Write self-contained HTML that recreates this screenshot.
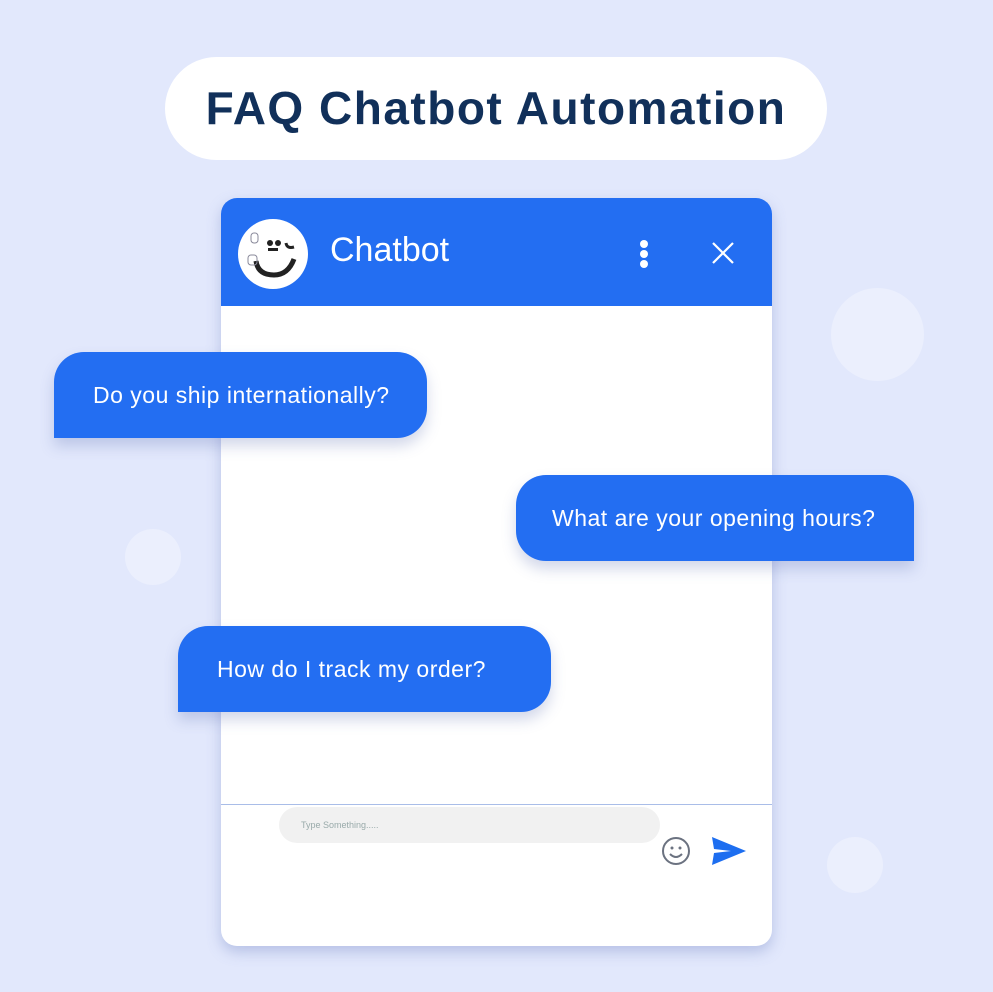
<!DOCTYPE html>
<html><head><style>
body{margin:0;width:993px;height:992px;background:#e2e8fc;position:relative;overflow:hidden;font-family:"Liberation Sans",sans-serif}
.c{position:absolute;border-radius:50%;background:#ebeffd}
.pill{position:absolute;left:165px;top:57px;width:662px;height:103px;border-radius:52px;background:#fff;text-align:center;line-height:103px;font-size:46px;font-weight:bold;color:#11305a;letter-spacing:1.5px}
.card{position:absolute;left:221px;top:198px;width:551px;height:748px;border-radius:16px;background:#fff;overflow:hidden;box-shadow:0 6px 14px rgba(100,120,190,.35)}
.hd{height:108px;background:#236ef2;position:relative}
.b{position:absolute;background:#236ef2;color:#fff;font-size:23px;letter-spacing:0.5px;height:86px;line-height:86px;border-radius:30px;box-shadow:0 8px 14px rgba(80,100,170,.25)}
</style></head><body>
<div class="c" style="left:831px;top:288px;width:93px;height:93px"></div>
<div class="c" style="left:125px;top:529px;width:56px;height:56px"></div>
<div class="c" style="left:827px;top:837px;width:56px;height:56px"></div>
<div class="pill">FAQ Chatbot Automation</div>
<div class="card">
 <div class="hd">
  <div style="position:absolute;left:17px;top:21px;width:70px;height:70px;border-radius:50%;background:#fff"></div>
  <svg style="position:absolute;left:17px;top:21px" width="70" height="70" viewBox="0 0 70 70"><circle cx="32" cy="24" r="3" fill="#222"/><circle cx="40" cy="24" r="3" fill="#222"/><rect x="30" y="29" width="10" height="3" fill="#222"/><path d="M48 24q1 6 8 4" stroke="#222" stroke-width="3" fill="none"/><path d="M18 42q2 14 18 14q14 0 20-16" stroke="#222" stroke-width="5" fill="none"/><rect x="13" y="14" width="7" height="10" rx="3" fill="none" stroke="#889"/><rect x="10" y="36" width="9" height="10" rx="3" fill="none" stroke="#889"/></svg>
  <div style="position:absolute;left:109px;top:33px;font-size:34px;color:#fff">Chatbot</div>
  <div style="position:absolute;left:419px;top:42px;width:8px;height:8px;border-radius:50%;background:#fff;box-shadow:0 10px 0 #fff,0 20px 0 #fff"></div>
  <svg style="position:absolute;left:490px;top:43px" width="24" height="24"><path d="M2 2L22 22M22 2L2 22" stroke="#fff" stroke-width="2.2"/></svg>
 </div>
 <div style="position:absolute;left:0;top:606px;width:551px;height:1px;background:#a9bde8"></div>
 <div style="position:absolute;left:58px;top:609px;width:381px;height:36px;border-radius:18px;background:#f1f1f1;font-size:9px;color:#9aa;line-height:36px;padding-left:22px;box-sizing:border-box">Type Something.....</div>
 <svg style="position:absolute;left:440px;top:638px" width="30" height="30" viewBox="0 0 30 30"><circle cx="15" cy="15" r="13" fill="none" stroke="#6b7280" stroke-width="2"/><circle cx="11" cy="12" r="1.5" fill="#6b7280"/><circle cx="19" cy="12" r="1.5" fill="#6b7280"/><path d="M9 18q6 6 12 0" stroke="#6b7280" stroke-width="2" fill="none"/></svg>
 <svg style="position:absolute;left:490px;top:638px" width="36" height="32" viewBox="0 0 36 32"><path d="M1 1L35 15L1 29L3 17L20 15L3 13Z" fill="#1d6ef0"/></svg>
</div>
<div class="b" style="left:54px;top:352px;width:373px;border-bottom-left-radius:0"><span style="padding-left:39px">Do you ship internationally?</span></div>
<div class="b" style="left:516px;top:475px;width:398px;border-bottom-right-radius:0"><span style="padding-left:36px">What are your opening hours?</span></div>
<div class="b" style="left:178px;top:626px;width:373px;border-bottom-left-radius:0"><span style="padding-left:39px">How do I track my order?</span></div>
</body></html>
